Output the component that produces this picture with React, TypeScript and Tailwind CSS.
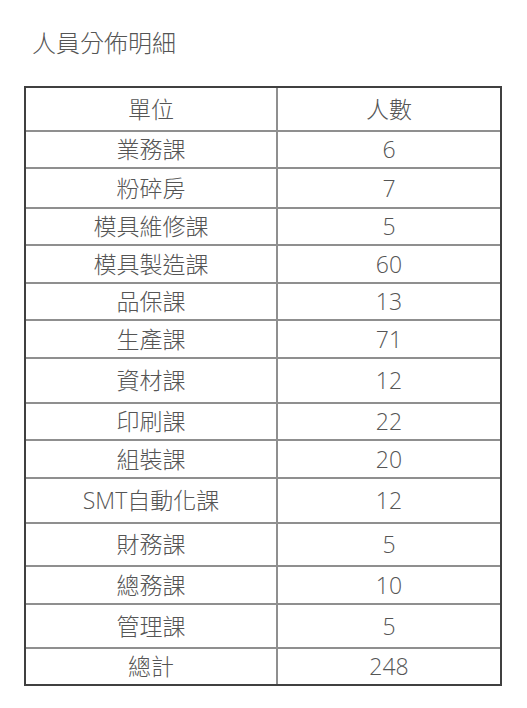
const rows: [string, string, number][] = [
  ['業務課', '6', 37],
  ['粉碎房', '7', 40],
  ['模具維修課', '5', 37],
  ['模具製造課', '60', 38],
  ['品保課', '13', 37],
  ['生產課', '71', 38],
  ['資材課', '12', 45],
  ['印刷課', '22', 37],
  ['組裝課', '20', 38],
  ['SMT自動化課', '12', 45],
  ['財務課', '5', 43],
  ['總務課', '10', 38],
  ['管理課', '5', 44],
  ['總計', '248', 37],
];

export default function App() {
  return (
    <div className="min-h-[708px] w-[527px] bg-white text-[#555] font-light font-['Open_Sans','Noto_Sans_CJK_TC',sans-serif]">
      <div className="pl-[32px] pt-[31px] text-[24px] leading-none text-[#555]">人員分佈明細</div>
      <div className="ml-[24px] mt-[31px] w-[478px] border-2 border-[#404040] text-[23px]">
        <div className="grid h-[42px] grid-cols-[252px_1fr] items-center text-center">
          <div className="flex h-full items-center justify-center border-r-2 border-[#8f8f8f]">單位</div>
          <div>人數</div>
        </div>
        {rows.map(([name, count, h]) => (
          <div
            key={name}
            style={{ height: h }}
            className="grid grid-cols-[252px_1fr] border-t-2 border-[#8f8f8f] text-center"
          >
            <div className="flex items-center justify-center border-r-2 border-[#8f8f8f]">{name}</div>
            <div className="flex items-center justify-center">{count}</div>
          </div>
        ))}
      </div>
    </div>
  );
}
